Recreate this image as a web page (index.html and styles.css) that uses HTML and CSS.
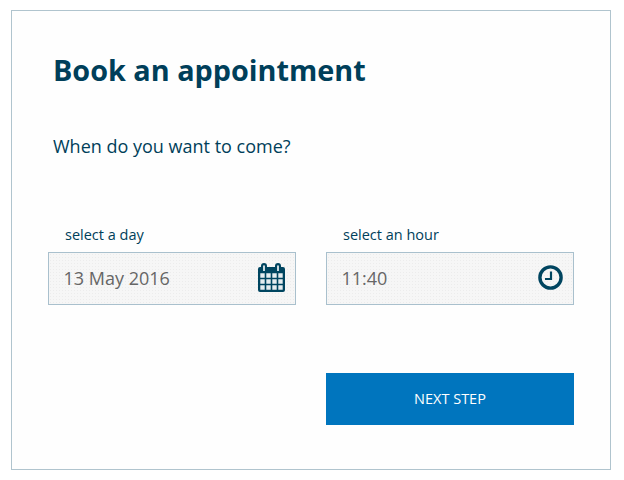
FILE: index.html
```html
<!DOCTYPE html>
<html lang="en">
<head>
  <meta charset="UTF-8" />
  <meta name="viewport" content="width=device-width, initial-scale=1.0" />
  <title>Book an appointment</title>
  <link rel="stylesheet" href="styles.css">
</head>
<body>
  <div class="card">
    <h1 class="title">Book an appointment</h1>
    <p class="question">When do you want to come?</p>
    <div class="fields">
      <div class="field">
        <label class="label">select a day</label>
        <div class="input">
          <span class="value">13 May 2016</span>
          <svg class="icon-calendar" width="28" height="30" viewBox="0 0 28 30">
            <path fill="#004560" d="M2 4h1V3a3 3 0 0 1 6 0v1h8V3a3 3 0 0 1 6 0v1h2a2 2 0 0 1 2 2v21a2 2 0 0 1-2 2H2a2 2 0 0 1-2-2V6a2 2 0 0 1 2-2z"/>
            <path fill="#fff" d="M5.200 3a.8.8 0 0 1 1.600 0v5H5.200zM19.200 3a.8.8 0 0 1 1.600 0v5h-1.600z"/>
            <path fill="#e6edf0" d="M2.300 10.300h4.400v4.400H2.300zM8.300 10.300h4.400v4.400H8.300zM14.300 10.300h4.400v4.400h-4.400zM20.300 10.300h4.400v4.400h-4.400zM2.300 16.300h4.400v4.400H2.300zM8.300 16.300h4.400v4.400H8.300zM14.300 16.300h4.400v4.400h-4.400zM20.300 16.300h4.400v4.400h-4.400zM2.300 22.300h4.400v4.400H2.300zM8.300 22.300h4.400v4.400H8.300zM14.300 22.300h4.400v4.400h-4.400zM20.300 22.300h4.400v4.400h-4.400z"/>
          </svg>
        </div>
      </div>
      <div class="field">
        <label class="label">select an hour</label>
        <div class="input">
          <span class="value">11:40</span>
          <svg class="icon-clock" width="27" height="26" viewBox="0 0 27 26">
            <circle cx="13.500" cy="12.500" r="10.600" fill="none" stroke="#004560" stroke-width="3.400"/>
            <path fill="none" stroke="#004560" stroke-width="2.200" d="M14 6.500V14H8"/>
          </svg>
        </div>
      </div>
    </div>
    <div class="actions">
      <button class="next">NEXT STEP</button>
    </div>
  </div>
</body>
</html>
```

FILE: styles.css
```css
* { margin: 0; padding: 0; box-sizing: border-box; }
body {
  font-family: "Open Sans", sans-serif;
  background-color: #fff;
  padding: 10px 0 0 11px;
}
.card {
  width: 600px;
  height: 460px;
  border: 1px solid #b0c4ce;
  background-color: #fefefe;
  padding: 40px 36px 0;
  color: #003f5a;
}
.title {
  font-size: 28.800px;
  line-height: 38px;
  font-weight: 700;
  padding-left: 5px;
}
.question {
  font-size: 18px;
  line-height: 24px;
  padding-left: 5px;
  margin-top: 45px;
}
.fields {
  display: grid;
  grid-template-columns: 248px 248px;
  gap: 30px;
  margin-top: 67px;
}
.label {
  display: block;
  font-size: 14.500px;
  line-height: 20px;
  padding-left: 17px;
  margin-bottom: 7px;
}
.input {
  height: 53px;
  border: 1px solid #a9c0cd;
  background-color: #f6f6f6;
  background-image: radial-gradient(#ececec 0.6px, transparent 0.8px);
  background-size: 3px 3px;
  display: flex;
  align-items: center;
  justify-content: space-between;
  padding: 0 9px 1px 14.500px;
}
.value {
  font-size: 18px;
  color: #666;
  margin-bottom: 1px;
}
.actions {
  display: flex;
  justify-content: flex-end;
  margin-top: 68px;
}
.next {
  width: 248px;
  height: 52px;
  border: none;
  background-color: #0075be;
  color: #fff;
  font-family: inherit;
  font-size: 14.500px;
  font-weight: 500;
  padding-bottom: 2px;
  cursor: pointer;
}
```
